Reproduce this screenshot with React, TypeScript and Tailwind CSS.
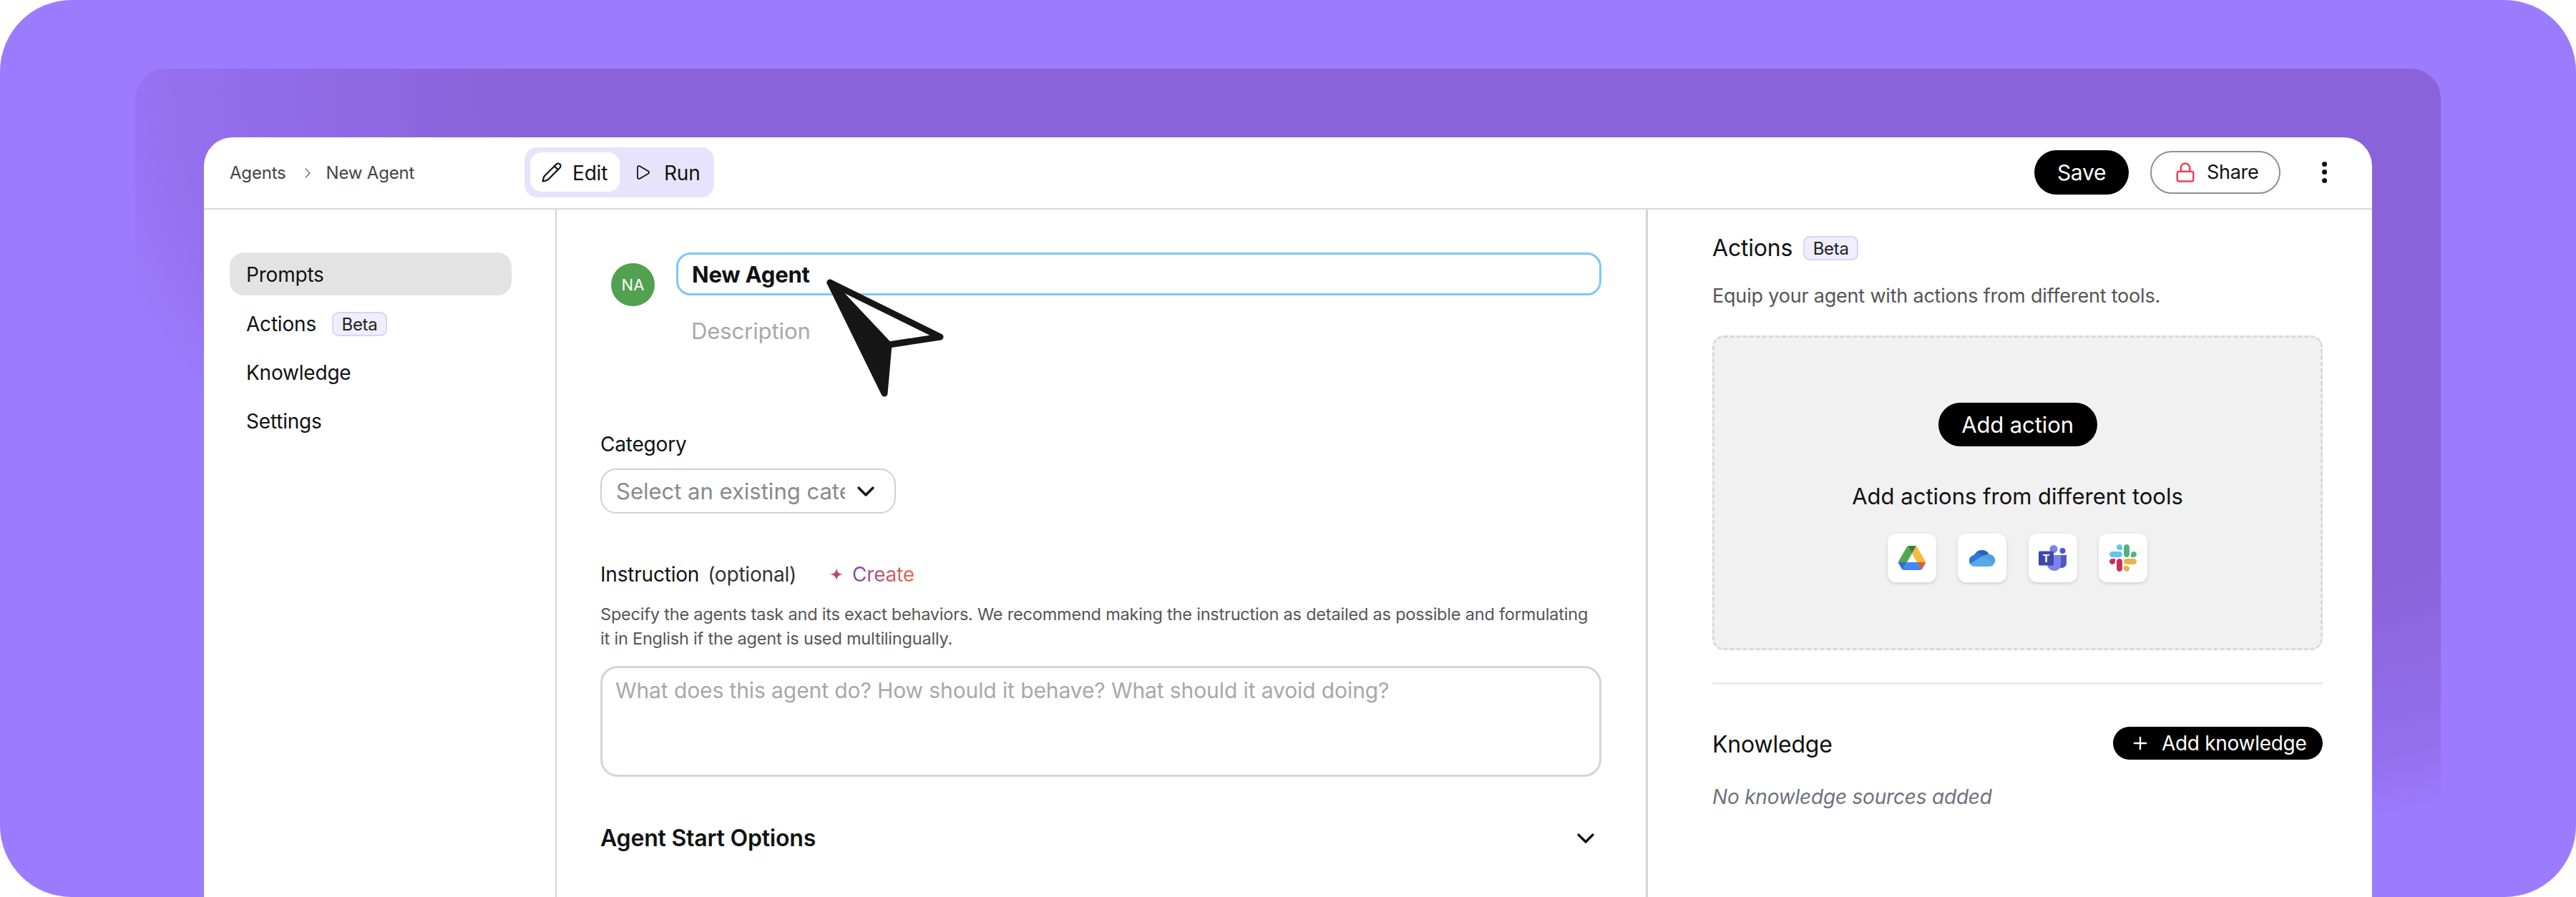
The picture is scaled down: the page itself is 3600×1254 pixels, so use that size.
import React from 'react';
import { ChevronDown, ChevronRight, Lock, Pencil, Play, Plus } from 'lucide-react';

const BetaBadge = () => (
    <span className="inline-flex h-[34px] w-[77px] items-center justify-center rounded-[9px] border-2 border-[#d9d2fb] bg-[#f0edfe] pt-[1px] text-[24px] tracking-[-0.3px] text-[#222]">
        Beta
    </span>
);

const DriveIcon = () => (
    <svg viewBox="0 0 87.3 78" className="h-[34px] w-[38px]">
        <path d="m6.6 66.85 3.85 6.65c.8 1.4 1.95 2.5 3.3 3.3l13.75-23.8h-27.5c0 1.55.4 3.1 1.2 4.5z" fill="#2f6fd0" />
        <path d="m43.65 25-13.75-23.8c-1.35.8-2.5 1.9-3.3 3.3l-25.4 44a9.06 9.06 0 0 0 -1.2 4.5h27.5z" fill="#51a852" />
        <path d="m73.55 76.8c1.35-.8 2.5-1.9 3.3-3.3l1.6-2.75 7.65-13.25c.8-1.4 1.2-2.95 1.2-4.5h-27.502l5.852 11.5z" fill="#dc5a3e" />
        <path d="m43.65 25 13.75-23.8c-1.35-.8-2.9-1.2-4.5-1.2h-18.5c-1.6 0-3.15.45-4.5 1.2z" fill="#3a7f3c" />
        <path d="m59.8 53h-32.3l-13.75 23.8c1.35.8 2.9 1.2 4.5 1.2h50.8c1.6 0 3.15-.45 4.5-1.2z" fill="#4285f4" />
        <path d="m73.4 26.5-12.7-22c-.8-1.4-1.95-2.5-3.3-3.3l-13.75 23.8 16.15 28h27.45c0-1.55-.4-3.1-1.2-4.5z" fill="#f4bc41" />
    </svg>
);

const OneDriveIcon = () => (
    <svg viewBox="0 0 36 23" className="h-[23px] w-[36px]">
        <defs>
            <clipPath id="onedrive-cloud">
                <path d="M8 23C3.500 23 0 19.500 0 15 0 11 3 7.500 7 7 9 3 13 0 18 0 22.500 0 26 2.500 27.500 6 32.500 6 36 10 36 14.500 36 19.500 32.500 23 28 23Z" />
            </clipPath>
        </defs>
        <g clipPath="url(#onedrive-cloud)">
            <rect width="36" height="23" fill="#5aa9e8" />
            <polygon points="0,20 17,9 22,6 10,0 0,0" fill="#3178d0" />
            <polygon points="17,9 36,18 36,0 27,0 22,6" fill="#4b9fe3" />
            <polygon points="10,0 30,0 27,5.500 20,7.500 13.500,5" fill="#2a63b5" />
        </g>
    </svg>
);

const TeamsIcon = () => (
    <svg viewBox="0 0 40 36" className="h-[36px] w-[40px]">
        <circle cx="33.500" cy="8" r="4" fill="#4f59c4" />
        <path d="M26 14h13v11c0 4-3 7-7 7-3 0-6-2-6-5z" fill="#4f59c4" />
        <circle cx="21" cy="5.500" r="5.500" fill="#7b83eb" />
        <path d="M12 14h19v14c0 4.500-4 8-9 8s-10-4-10-9z" fill="#7b83eb" />
        <rect x="0" y="8.500" width="21" height="20" rx="1.500" fill="#3f49a8" />
        <text x="10.500" y="24" textAnchor="middle" fontSize="15" fontWeight="700" fill="#ffffff" fontFamily="Inter, sans-serif">T</text>
    </svg>
);

const SlackIcon = () => (
    <svg viewBox="0 0 122.800 122.800" className="h-[38px] w-[38px]">
        <path d="M25.800 77.600c0 7.100-5.800 12.900-12.900 12.900S0 84.700 0 77.600s5.800-12.900 12.900-12.900h12.900v12.900z" fill="#cc2f55" />
        <path d="M32.300 77.600c0-7.100 5.800-12.900 12.900-12.900s12.900 5.800 12.900 12.900v32.300c0 7.100-5.800 12.900-12.900 12.900s-12.900-5.800-12.900-12.900V77.600z" fill="#cc2f55" />
        <path d="M45.200 25.800c-7.100 0-12.900-5.800-12.900-12.900S38.100 0 45.200 0s12.900 5.800 12.900 12.900v12.900H45.200z" fill="#63c5ee" />
        <path d="M45.200 32.300c7.100 0 12.900 5.800 12.900 12.900s-5.800 12.900-12.900 12.900H12.900C5.800 58.100 0 52.300 0 45.200s5.800-12.900 12.900-12.900h32.300z" fill="#63c5ee" />
        <path d="M97 45.200c0-7.100 5.800-12.900 12.900-12.900s12.900 5.800 12.900 12.900-5.800 12.900-12.900 12.900H97V45.200z" fill="#50b47f" />
        <path d="M90.500 45.200c0 7.100-5.800 12.900-12.900 12.900s-12.900-5.800-12.900-12.900V12.900C64.700 5.800 70.500 0 77.600 0s12.900 5.800 12.900 12.900v32.300z" fill="#50b47f" />
        <path d="M77.600 97c7.100 0 12.900 5.800 12.900 12.900s-5.800 12.900-12.900 12.900-12.900-5.800-12.900-12.900V97h12.900z" fill="#e6b44a" />
        <path d="M77.600 90.500c-7.100 0-12.900-5.800-12.900-12.900s5.800-12.900 12.900-12.900h32.300c7.100 0 12.900 5.800 12.900 12.900s-5.800 12.900-12.900 12.900H77.600z" fill="#e6b44a" />
    </svg>
);

const tools = [
    { id: 'drive', icon: <DriveIcon /> },
    { id: 'onedrive', icon: <OneDriveIcon /> },
    { id: 'teams', icon: <TeamsIcon /> },
    { id: 'slack', icon: <SlackIcon /> },
];

const App: React.FC = () => {
    return (
        <div className="h-[1254px] w-[3600px] overflow-hidden bg-white font-['Inter',sans-serif] text-[#111]">
            <div className="h-full rounded-[100px] bg-[#9c7bff] pl-[189px] pr-[189px] pt-[96px]">
                <div className="h-full rounded-t-[42px] bg-[radial-gradient(2319px_1144px_at_2211px_4px,#8a62d9_0%,#8a62d9_72%,#9470ee_93%,#9c7bff_100%)] px-[96px] pt-[96px]">
                    <div className="flex h-full flex-col overflow-hidden rounded-t-[40px] bg-white">
                        {/* Header */}
                        <div className="flex h-[101px] shrink-0 items-center border-b-2 border-[#d9d9d9] pb-[2px] pr-[62px]">
                            <div className="flex w-[448px] items-center pl-[36px] pt-[2px] text-[24px] tracking-[-0.2px] text-[#444]">
                                <span>Agents</span>
                                <ChevronRight className="ml-[18px] mr-[14px] h-[24px] w-[24px] text-[#666]" strokeWidth={1.25} />
                                <span>New Agent</span>
                            </div>
                            <div className="flex h-[70px] w-[265px] items-center rounded-[18px] bg-[#e8e3fc] px-[8px] text-[28px] tracking-[-0.2px]">
                                <div className="flex h-[55px] w-[125px] items-center gap-[14px] rounded-[16px] bg-white pl-[15px]">
                                    <Pencil className="h-[30px] w-[30px]" strokeWidth={1.75} />
                                    <span className="pt-[2px]">Edit</span>
                                </div>
                                <div className="flex items-center gap-[18px] pl-[20px]">
                                    <Play className="h-[28px] w-[24px]" strokeWidth={1.75} />
                                    <span className="pt-[2px]">Run</span>
                                </div>
                            </div>
                            <div className="ml-auto flex h-[62px] w-[132px] items-center justify-center rounded-full bg-black pt-[2px] text-[30px] tracking-[-0.3px] text-white">
                                Save
                            </div>
                            <div className="ml-[30px] flex h-[60px] w-[182px] items-center gap-[15px] rounded-full border-2 border-[#8f8f8f] pl-[32px] text-[27px] tracking-[-0.3px]">
                                <Lock className="h-[32px] w-[30px] text-[#e8445a]" strokeWidth={2} />
                                <span className="pt-[2px]">Share</span>
                            </div>
                            <div className="ml-[58px] flex h-[30px] w-[8px] flex-col justify-between">
                                <span className="h-[7px] w-[7px] rounded-full bg-[#111]" />
                                <span className="h-[7px] w-[7px] rounded-full bg-[#111]" />
                                <span className="h-[7px] w-[7px] rounded-full bg-[#111]" />
                            </div>
                        </div>

                        <div className="flex flex-1 overflow-hidden">
                            {/* Sidebar */}
                            <div className="w-[493px] shrink-0 border-r-2 border-[#d4d4d4] pl-[36px] pr-[61px] pt-[60px] text-[28px] tracking-[-0.2px]">
                                <div className="flex h-[60px] items-center rounded-[20px] bg-[#e3e3e3] pl-[23px] pt-[2px]">Prompts</div>
                                <div className="mt-[6px] flex h-[68px] items-center gap-[22px] pl-[23px]">
                                    <span>Actions</span>
                                    <BetaBadge />
                                </div>
                                <div className="flex h-[68px] items-center pl-[23px]">Knowledge</div>
                                <div className="flex h-[68px] items-center pl-[23px]">Settings</div>
                            </div>

                            {/* Main column */}
                            <div className="relative w-[1525px] shrink-0 border-r-[3px] border-[#d4d4d4] pl-[61px] pr-[62px] pt-[60px]">
                                <div className="flex">
                                    <div className="ml-[15px] mt-[15px] flex h-[60px] w-[61px] shrink-0 items-center justify-center rounded-full bg-[#51a150] text-[22px] text-white">
                                        NA
                                    </div>
                                    <div className="ml-[30px] flex h-[60px] flex-1 items-center rounded-[20px] border-[3px] border-[#7cc8f5] pl-[19px] pt-[2px] text-[31px] font-bold tracking-[-0.2px]">
                                        New Agent
                                    </div>
                                </div>
                                <div className="ml-[127px] mt-[15px] text-[31px] leading-[40px] tracking-[-0.1px] text-[#a8a8a8]">Description</div>

                                <div className="mt-[120px] text-[28px] leading-[36px] tracking-[-0.2px]">Category</div>
                                <div className="mt-[16px] flex h-[63px] w-[413px] items-center rounded-[22px] border-2 border-[#d0d0d0] pl-[20px]">
                                    <div className="w-[320px] overflow-hidden whitespace-nowrap pt-[2px] text-[31px] text-[#8a8a8a]">
                                        Select an existing category
                                    </div>
                                    <ChevronDown className="ml-[9px] h-[40px] w-[40px]" strokeWidth={2} />
                                </div>

                                <div className="mt-[67px] flex items-center text-[28px] leading-[36px] tracking-[-0.2px]">
                                    <span>Instruction</span>
                                    <span className="ml-[12px] text-[#333]">(optional)</span>
                                    <svg viewBox="0 0 18 18" className="ml-[47px] h-[18px] w-[18px]">
                                        <path d="M9 0C9.600 5.500 11.500 8 18 9 11.500 10 9.600 12.500 9 18 8.400 12.500 6.500 10 0 9 6.500 8 8.400 5.500 9 0Z" fill="#b8495f" />
                                    </svg>
                                    <span className="ml-[13px] bg-[linear-gradient(90deg,#7a4aa8,#ec6a3a)] bg-clip-text text-transparent">Create</span>
                                </div>
                                <p className="mt-[21px] text-[23.5px] leading-[34px] tracking-[-0.2px] text-[#555]">
                                    Specify the agents task and its exact behaviors. We recommend making the instruction as detailed as possible and formulating
                                    <br />
                                    it in English if the agent is used multilingually.
                                </p>
                                <div className="mt-[21px] h-[155px] rounded-[24px] border-[3px] border-[#d5d5d5] pl-[18px] pt-[11px] text-[30px] leading-[40px] tracking-[-0.1px] text-[#a8a8a8]">
                                    What does this agent do? How should it behave? What should it avoid doing?
                                </div>

                                <div className="mt-[66px] flex items-center justify-between pr-[2px] text-[32px] font-semibold leading-[40px] tracking-[-0.2px]">
                                    <span>Agent Start Options</span>
                                    <ChevronDown className="h-[40px] w-[40px]" strokeWidth={2} />
                                </div>

                                {/* Pointer drawn over the name field */}
                                <svg viewBox="0 0 190 190" className="absolute left-[366px] top-[87px] h-[190px] w-[190px]">
                                    <path d="M16 15 170 91 98 102Z" fill="#ffffff" stroke="#161616" strokeWidth="9" strokeLinejoin="round" />
                                    <path d="M16 15 98 102 92 170Z" fill="#161616" stroke="#161616" strokeWidth="9" strokeLinejoin="round" />
                                </svg>
                            </div>

                            {/* Right column */}
                            <div className="flex-1 pl-[90px] pr-[69px] pt-[34px]">
                                <div className="flex items-center gap-[15px] text-[32px] leading-[40px] tracking-[-0.2px]">
                                    <span>Actions</span>
                                    <BetaBadge />
                                </div>
                                <p className="mt-[27px] pt-[2px] text-[27px] leading-[36px] tracking-[-0.2px] text-[#555]">Equip your agent with actions from different tools.</p>
                                <div className="mt-[37px] flex h-[440px] flex-col items-center rounded-[16px] border-[3px] border-dashed border-[#d9d9d9] bg-[#f1f1f1] pt-[91px]">
                                    <div className="flex h-[61px] w-[222px] items-center justify-center rounded-full bg-black pt-[2px] text-[31px] tracking-[-0.1px] text-white">
                                        Add action
                                    </div>
                                    <div className="mt-[50px] text-[31px] leading-[40px] text-[#111]">Add actions from different tools</div>
                                    <div className="mt-[32px] flex gap-[30.5px]">
                                        {tools.map(tool => (
                                            <div key={tool.id} className="flex h-[68px] w-[68px] items-center justify-center rounded-[12px] bg-white shadow-[0_2px_5px_rgba(0,0,0,0.14)]">
                                                {tool.icon}
                                            </div>
                                        ))}
                                    </div>
                                </div>
                                <div className="mt-[45px] h-[3px] bg-[#ececec]" />
                                <div className="mt-[59px] flex items-center justify-between">
                                    <span className="mt-[4px] text-[32px] leading-[40px] tracking-[-0.2px]">Knowledge</span>
                                    <div className="flex h-[46px] w-[293px] items-center gap-[16px] rounded-full bg-black pl-[24px] text-[28px] tracking-[-0.3px] text-white">
                                        <Plus className="h-[28px] w-[28px]" strokeWidth={2} />
                                        <span>Add knowledge</span>
                                    </div>
                                </div>
                                <p className="mt-[34px] text-[28px] italic leading-[36px] tracking-[-0.2px] text-[#6d7280]">No knowledge sources added</p>
                            </div>
                        </div>
                    </div>
                </div>
            </div>
        </div>
    );
};

export default App;
